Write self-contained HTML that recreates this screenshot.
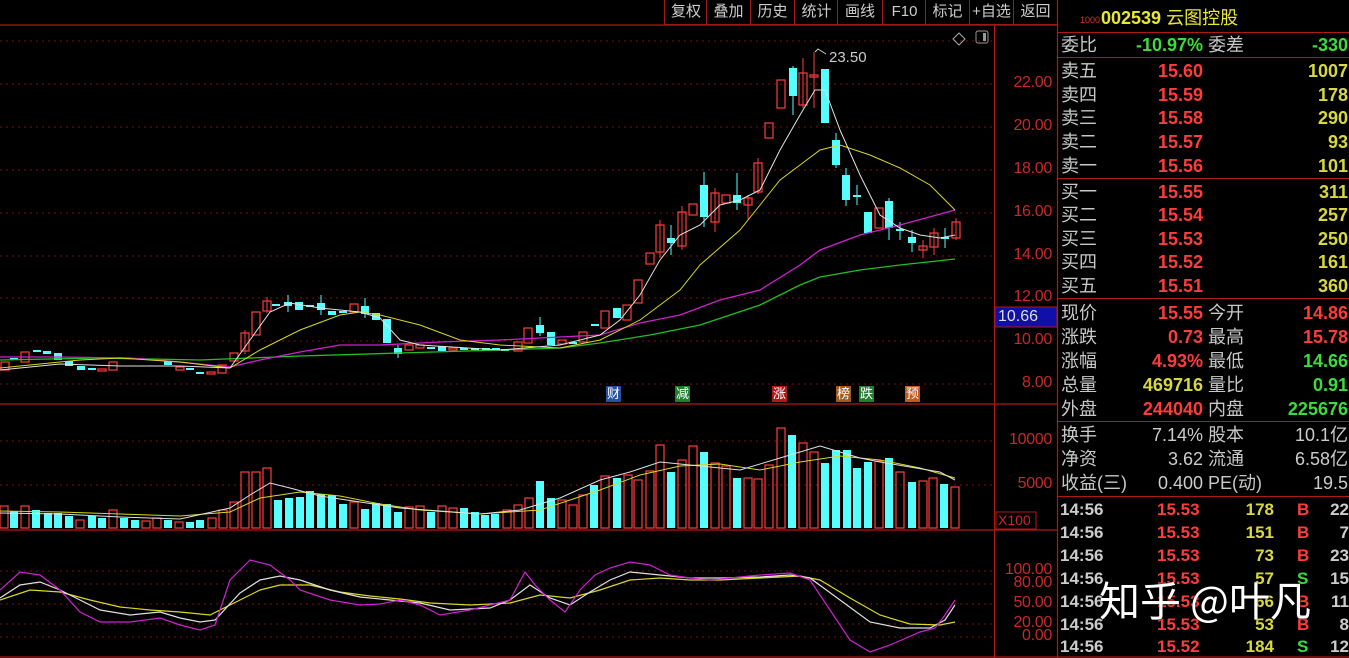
<!DOCTYPE html>
<html><head><meta charset="utf-8"><style>
html,body{margin:0;padding:0;background:#000;width:1349px;height:658px;overflow:hidden}
body{position:relative;font-family:"Liberation Sans","Noto Sans CJK SC",sans-serif}
.t{position:absolute;white-space:nowrap}
.btn{position:absolute;top:0;height:24px;line-height:24px;color:#ccc;font-size:15px;text-align:center;border-left:1px solid #a01818;border-bottom:1px solid #a01818}
.ax{position:absolute;right:297px;color:#c82828;font-size:16px;font-family:"Liberation Sans",sans-serif;letter-spacing:-0.3px}
.r{position:absolute;left:1057px;width:292px;height:24px;font-size:18px;line-height:24px}
.r .l{position:absolute;left:4px;color:#c8c8c8}
.r .v{position:absolute;right:146px;font-weight:bold}
.r .l2{position:absolute;left:151px;color:#c8c8c8}
.r .v2{position:absolute;right:1px;font-weight:bold}
.k{position:absolute;left:1057px;width:292px;height:23px;font-size:17px;line-height:23px;font-weight:bold}
.k span{position:absolute}
.red{color:#ff3c3c}.yel{color:#d8d840}.grn{color:#3cdc3c}.wht{color:#ccc}
.hl{position:absolute;left:1057px;width:292px;height:1px;background:#b01818}
.mk{position:absolute;top:386px;width:15px;height:16px;font-size:13px;line-height:16px;text-align:center;color:#fff}
</style></head><body>
<svg width="1349" height="658" style="position:absolute;left:0;top:0">
<g stroke="#7a1010" stroke-dasharray="2,4" stroke-width="1">
<line x1="0" y1="41" x2="994" y2="41"/><line x1="0" y1="84" x2="994" y2="84"/><line x1="0" y1="127" x2="994" y2="127"/><line x1="0" y1="170" x2="994" y2="170"/><line x1="0" y1="213" x2="994" y2="213"/><line x1="0" y1="256" x2="994" y2="256"/><line x1="0" y1="298" x2="994" y2="298"/><line x1="0" y1="341" x2="994" y2="341"/><line x1="0" y1="384" x2="994" y2="384"/>
<line x1="0" y1="441" x2="994" y2="441"/><line x1="0" y1="485" x2="994" y2="485"/>
<line x1="0" y1="571" x2="994" y2="571"/><line x1="0" y1="584" x2="994" y2="584"/><line x1="0" y1="604" x2="994" y2="604"/><line x1="0" y1="624" x2="994" y2="624"/><line x1="0" y1="637" x2="994" y2="637"/>
</g>
<g stroke="#b01818" stroke-width="1.2">
<line x1="0" y1="25" x2="1057" y2="25"/>
<line x1="0" y1="404" x2="1057" y2="404"/><line x1="0" y1="530" x2="1057" y2="530"/>
<line x1="994.5" y1="25" x2="994.5" y2="658"/><line x1="1057.5" y1="0" x2="1057.5" y2="658"/>
<line x1="0" y1="657" x2="1349" y2="657"/>
</g>
<rect x="996" y="512" width="40" height="17" fill="none" stroke="#b01818"/>
<rect x="995" y="307" width="62" height="20" fill="#1010a8" stroke="#b01818"/>
<path d="M959 33l6 6-6 6-6-6z" fill="none" stroke="#aaa"/><rect x="976" y="31" width="12" height="12" rx="2" fill="none" stroke="#999"/><rect x="983" y="33" width="3" height="8" fill="#999"/>
<g stroke-width="1">
<g stroke="#ff3c3c"><line x1="660" y1="220" x2="660" y2="258"/><line x1="682" y1="206" x2="682" y2="250"/><line x1="715" y1="188" x2="715" y2="232"/><line x1="748" y1="195" x2="748" y2="219"/><line x1="758" y1="158" x2="758" y2="194"/><line x1="803" y1="58" x2="803" y2="108"/><line x1="814" y1="52" x2="814" y2="108"/><line x1="245" y1="330" x2="245" y2="354"/><line x1="267" y1="297" x2="267" y2="313"/><line x1="934" y1="228" x2="934" y2="255"/><line x1="923" y1="240" x2="923" y2="258"/><line x1="956" y1="218" x2="956" y2="240"/></g>
<g stroke="#5ff"><line x1="704" y1="172" x2="704" y2="227"/><line x1="737" y1="173" x2="737" y2="210"/><line x1="671" y1="225" x2="671" y2="255"/><line x1="793" y1="66" x2="793" y2="115"/><line x1="846" y1="168" x2="846" y2="206"/><line x1="857" y1="185" x2="857" y2="205"/><line x1="889" y1="198" x2="889" y2="240"/><line x1="900" y1="222" x2="900" y2="240"/><line x1="912" y1="230" x2="912" y2="252"/><line x1="945" y1="228" x2="945" y2="248"/><line x1="540" y1="317" x2="540" y2="336"/><line x1="288" y1="295" x2="288" y2="312"/><line x1="321" y1="295" x2="321" y2="315"/><line x1="365" y1="298" x2="365" y2="318"/><line x1="398" y1="345" x2="398" y2="358"/><line x1="836" y1="133" x2="836" y2="168"/></g>
</g>
<g fill="none" stroke="#ff3c3c" stroke-width="1.2">
<rect x="1" y="362" width="8" height="8"/><rect x="21" y="352" width="8" height="10"/><rect x="98" y="369" width="8" height="2"/><rect x="109" y="362" width="8" height="8"/><rect x="176" y="367" width="8" height="3"/><rect x="207" y="372" width="8" height="2"/><rect x="218" y="365" width="8" height="8"/><rect x="230" y="353" width="8" height="8"/><rect x="241" y="333" width="8" height="18"/><rect x="252" y="312" width="8" height="23"/><rect x="263" y="301" width="8" height="10"/><rect x="350" y="304" width="8" height="8"/><rect x="405" y="345" width="8" height="5"/><rect x="416" y="345" width="8" height="3"/><rect x="449" y="348" width="8" height="2"/>
<rect x="514" y="342" width="8" height="9"/><rect x="524" y="328" width="8" height="15"/><rect x="558" y="340" width="8" height="4"/><rect x="579" y="332" width="8" height="10"/><rect x="601" y="311" width="8" height="17"/><rect x="623" y="305" width="8" height="15"/><rect x="634" y="280" width="8" height="23"/><rect x="646" y="253" width="8" height="11"/><rect x="656" y="225" width="8" height="27"/><rect x="678" y="212" width="8" height="34"/><rect x="689" y="204" width="8" height="11"/><rect x="711" y="193" width="8" height="29"/><rect x="722" y="195" width="8" height="8"/><rect x="744" y="198" width="8" height="7"/><rect x="754" y="163" width="8" height="29"/><rect x="765" y="123" width="8" height="15"/><rect x="777" y="80" width="8" height="28"/><rect x="799" y="73" width="8" height="32"/><rect x="810" y="75" width="8" height="2"/><rect x="875" y="208" width="8" height="20"/><rect x="919" y="246" width="8" height="4"/><rect x="930" y="233" width="8" height="14"/><rect x="952" y="222" width="8" height="16"/>
</g>
<g fill="#5ff">
<rect x="10" y="358" width="8" height="2"/><rect x="33" y="350" width="8" height="2"/><rect x="43" y="351" width="8" height="3"/><rect x="54" y="353" width="8" height="7"/><rect x="65" y="361" width="8" height="5"/><rect x="77" y="366" width="8" height="4"/><rect x="88" y="368" width="8" height="2"/><rect x="164" y="361" width="8" height="4"/><rect x="186" y="368" width="8" height="2"/><rect x="196" y="372" width="8" height="2"/>
<rect x="272" y="304" width="8" height="2"/><rect x="284" y="302" width="8" height="4"/><rect x="295" y="302" width="8" height="8"/><rect x="306" y="305" width="8" height="2"/><rect x="317" y="303" width="8" height="7"/><rect x="328" y="311" width="8" height="4"/><rect x="339" y="311" width="8" height="2"/><rect x="361" y="306" width="8" height="8"/><rect x="372" y="313" width="8" height="7"/><rect x="383" y="319" width="8" height="24"/><rect x="394" y="348" width="8" height="6"/><rect x="427" y="347" width="8" height="2"/><rect x="438" y="346" width="8" height="5"/><rect x="460" y="348" width="8" height="2"/><rect x="471" y="348" width="8" height="2"/><rect x="482" y="348" width="8" height="2"/><rect x="492" y="348" width="8" height="2"/><rect x="501" y="349" width="8" height="2"/>
<rect x="536" y="325" width="8" height="8"/><rect x="547" y="332" width="8" height="13"/><rect x="569" y="342" width="8" height="2"/><rect x="591" y="324" width="8" height="2"/><rect x="613" y="308" width="8" height="10"/><rect x="667" y="238" width="8" height="5"/><rect x="700" y="185" width="8" height="32"/><rect x="733" y="195" width="8" height="8"/><rect x="789" y="68" width="8" height="28"/><rect x="821" y="69" width="8" height="54"/><rect x="832" y="140" width="8" height="25"/><rect x="842" y="175" width="8" height="25"/><rect x="853" y="195" width="8" height="2"/><rect x="864" y="212" width="8" height="21"/><rect x="885" y="201" width="8" height="27"/><rect x="896" y="229" width="8" height="2"/><rect x="908" y="237" width="8" height="6"/><rect x="941" y="237" width="8" height="2"/>
</g>
<g fill="none" stroke-width="1.3">
<polyline stroke="#20c020" points="0,360 100,358 200,360 300,356 400,353 500,350 560,348 600,343 650,335 700,325 760,305 800,285 820,277 860,270 900,265 955,259"/>
<polyline stroke="#d020d0" points="0,357 60,357 130,358 180,362 230,367 260,360 300,352 340,345 380,345 440,342 500,340 560,337 600,335 640,323 680,315 720,300 760,290 800,265 820,250 860,235 900,225 955,210"/>
<polyline stroke="#d8d820" stroke-width="1" points="0,368 40,364 80,360 120,358 180,362 230,368 260,350 300,330 340,315 360,312 380,315 420,325 460,340 500,345 560,348 600,340 640,320 680,290 700,265 740,230 760,205 780,180 800,165 820,150 840,145 870,155 900,168 930,185 955,210"/>
<polyline stroke="#e0e0e0" stroke-width="1" points="0,370 60,364 120,366 180,366 230,368 250,340 270,312 290,303 320,308 360,312 380,318 400,340 420,345 500,350 560,345 600,335 620,320 640,295 660,260 680,235 700,225 720,205 740,200 760,190 780,150 800,115 815,90 825,90 840,130 860,175 880,215 900,228 920,235 940,238 955,235"/>
</g>
<path d="M815 52l3-3 8 5" fill="none" stroke="#ccc"/>
<g fill="none" stroke="#ff3c3c" stroke-width="1.2">
<rect x="0" y="506" width="8" height="22"/><rect x="21" y="506" width="8" height="22"/><rect x="76" y="520" width="8" height="8"/><rect x="109" y="510" width="8" height="18"/><rect x="142" y="521" width="8" height="7"/><rect x="153" y="518" width="8" height="10"/><rect x="175" y="522" width="8" height="6"/><rect x="208" y="518" width="8" height="10"/><rect x="219" y="510" width="8" height="18"/><rect x="230" y="502" width="8" height="26"/><rect x="241" y="472" width="8" height="56"/><rect x="252" y="472" width="8" height="56"/><rect x="263" y="468" width="8" height="60"/><rect x="350" y="502" width="8" height="26"/><rect x="405" y="507" width="8" height="21"/><rect x="416" y="506" width="8" height="22"/><rect x="438" y="506" width="8" height="22"/><rect x="449" y="508" width="8" height="20"/>
<rect x="503" y="510" width="8" height="18"/><rect x="514" y="505" width="8" height="23"/><rect x="525" y="498" width="8" height="30"/><rect x="558" y="500" width="8" height="28"/><rect x="569" y="505" width="8" height="23"/><rect x="579" y="495" width="8" height="33"/><rect x="601" y="476" width="8" height="52"/><rect x="624" y="475" width="8" height="53"/><rect x="634" y="480" width="8" height="48"/><rect x="646" y="471" width="8" height="57"/><rect x="656" y="445" width="8" height="83"/><rect x="678" y="460" width="8" height="68"/><rect x="689" y="446" width="8" height="82"/><rect x="711" y="463" width="8" height="65"/><rect x="722" y="466" width="8" height="62"/><rect x="744" y="478" width="8" height="50"/><rect x="754" y="479" width="8" height="49"/><rect x="765" y="465" width="8" height="63"/><rect x="777" y="428" width="8" height="100"/><rect x="799" y="443" width="8" height="85"/><rect x="810" y="452" width="8" height="76"/><rect x="875" y="461" width="8" height="67"/><rect x="896" y="472" width="8" height="56"/><rect x="919" y="481" width="8" height="47"/><rect x="929" y="478" width="8" height="50"/><rect x="951" y="487" width="8" height="41"/>
</g>
<g fill="#5ff">
<rect x="10" y="511" width="8" height="17"/><rect x="32" y="510" width="8" height="18"/><rect x="44" y="513" width="8" height="15"/><rect x="54" y="513" width="8" height="15"/><rect x="65" y="516" width="8" height="12"/><rect x="88" y="516" width="8" height="12"/><rect x="98" y="518" width="8" height="10"/><rect x="120" y="518" width="8" height="10"/><rect x="131" y="520" width="8" height="8"/><rect x="164" y="520" width="8" height="8"/><rect x="186" y="522" width="8" height="6"/><rect x="196" y="520" width="8" height="8"/>
<rect x="274" y="500" width="8" height="28"/><rect x="285" y="498" width="8" height="30"/><rect x="296" y="497" width="8" height="31"/><rect x="306" y="491" width="8" height="37"/><rect x="317" y="494" width="8" height="34"/><rect x="328" y="495" width="8" height="33"/><rect x="339" y="504" width="8" height="24"/><rect x="361" y="509" width="8" height="19"/><rect x="372" y="503" width="8" height="25"/><rect x="383" y="504" width="8" height="24"/><rect x="394" y="512" width="8" height="16"/><rect x="427" y="512" width="8" height="16"/><rect x="460" y="508" width="8" height="20"/><rect x="471" y="512" width="8" height="16"/><rect x="481" y="515" width="8" height="13"/><rect x="491" y="514" width="8" height="14"/>
<rect x="536" y="481" width="8" height="47"/><rect x="547" y="498" width="8" height="30"/><rect x="590" y="485" width="8" height="43"/><rect x="613" y="478" width="8" height="50"/><rect x="667" y="472" width="8" height="56"/><rect x="700" y="452" width="8" height="76"/><rect x="733" y="478" width="8" height="50"/><rect x="788" y="435" width="8" height="93"/><rect x="821" y="463" width="8" height="65"/><rect x="832" y="450" width="8" height="78"/><rect x="843" y="450" width="8" height="78"/><rect x="853" y="468" width="8" height="60"/><rect x="864" y="462" width="8" height="66"/><rect x="885" y="458" width="8" height="70"/><rect x="908" y="482" width="8" height="46"/><rect x="940" y="484" width="8" height="44"/>
</g>
<g fill="none" stroke-width="1">
<polyline stroke="#d8d820" points="0,511 60,512 120,514 180,516 230,512 260,498 300,492 340,496 380,504 420,510 480,514 540,510 600,490 640,475 680,466 720,464 760,470 800,462 840,456 880,460 920,468 955,478"/>
<polyline stroke="#e0e0e0" points="0,513 60,514 120,517 180,519 230,508 250,495 270,483 290,488 320,496 360,502 400,508 440,511 480,514 520,510 560,498 600,480 630,472 660,462 700,466 740,470 780,458 800,452 820,446 840,452 860,458 880,462 910,467 940,472 955,480"/>
</g>
<g fill="none" stroke-width="1.2">
<polyline stroke="#d8d820" points="0,600 30,590 60,592 90,600 120,607 150,610 180,612 210,615 240,600 260,590 280,585 310,585 340,592 370,596 400,599 430,603 470,605 510,603 540,595 570,598 600,590 630,580 660,578 690,580 720,580 760,578 800,576 820,580 850,598 880,615 910,624 940,625 955,622"/>
<polyline stroke="#e0e0e0" points="0,598 20,585 40,582 60,590 80,600 100,610 130,615 160,612 180,618 200,622 215,620 240,593 260,580 280,576 300,580 330,590 360,597 390,600 420,603 450,610 490,608 510,600 530,585 550,598 570,605 590,592 610,580 630,572 660,575 690,578 720,578 760,577 790,575 810,578 840,600 870,622 900,628 930,628 945,620 955,605"/>
<polyline stroke="#d020d0" points="0,590 20,572 40,575 60,590 80,612 100,622 130,622 160,618 180,625 200,630 215,625 230,580 250,560 270,565 290,580 300,590 330,600 360,605 380,604 400,600 420,605 440,615 470,610 490,605 510,600 525,572 535,585 550,600 565,612 580,590 595,575 610,568 630,562 650,565 670,575 690,578 710,580 730,578 760,575 790,573 810,580 830,610 850,640 870,652 890,645 920,632 935,628 945,615 955,600"/>
</g>
</svg>

<div class="t" style="left:829px;top:49px;color:#ccc;font-size:15px">23.50</div>

<div class="btn" style="left:664px;width:42px">复权</div><div class="btn" style="left:706px;width:43px">叠加</div><div class="btn" style="left:750px;width:43px">历史</div><div class="btn" style="left:794px;width:43px">统计</div><div class="btn" style="left:837px;width:44px">画线</div><div class="btn" style="left:882px;width:43px">F10</div><div class="btn" style="left:925px;width:43px">标记</div><div class="btn" style="left:969px;width:43px">+自选</div><div class="btn" style="left:1013px;width:43px">返回</div>

<div class="ax" style="top:74px">22.00</div><div class="ax" style="top:117px">20.00</div><div class="ax" style="top:160px">18.00</div><div class="ax" style="top:203px">16.00</div><div class="ax" style="top:246px">14.00</div><div class="ax" style="top:288px">12.00</div>
<div class="t" style="left:998px;top:308px;color:#ddd;font-size:16px">10.66</div>
<div class="ax" style="top:331px">10.00</div><div class="ax" style="top:374px">8.00</div>
<div class="ax" style="top:431px">10000</div><div class="ax" style="top:475px">5000</div>
<div class="t" style="left:998px;top:512px;color:#c82828;font-size:14px">X100</div>
<div class="ax" style="top:561px">100.00</div><div class="ax" style="top:574px">80.00</div><div class="ax" style="top:594px">50.00</div><div class="ax" style="top:614px">20.00</div><div class="ax" style="top:627px">0.00</div>

<div class="mk" style="left:606px;background:#2850a0">财</div><div class="mk" style="left:675px;background:#208030">减</div><div class="mk" style="left:772px;background:#b01818">涨</div><div class="mk" style="left:836px;background:#a05a20">榜</div><div class="mk" style="left:859px;background:#208030">跌</div><div class="mk" style="left:905px;background:#c05a20">预</div>

<div class="t" style="left:1080px;top:15px;color:#d83030;font-size:9px">1000</div>
<div class="t" style="left:1101px;top:4px;color:#e8e830;font-size:18px;font-weight:bold">002539 <span style="font-weight:normal">云图控股</span></div>
<div class="hl" style="top:32px"></div>
<div class="r" style="top:33px"><span class="l">委比</span><span class="v grn">-10.97%</span><span class="l2">委差</span><span class="v2 grn">-330</span></div>
<div class="hl" style="top:57px"></div>
<div class="r" style="top:59px"><span class="l">卖五</span><span class="v red">15.60</span><span class="v2 yel">1007</span></div>
<div class="r" style="top:83px"><span class="l">卖四</span><span class="v red">15.59</span><span class="v2 yel">178</span></div>
<div class="r" style="top:106px"><span class="l">卖三</span><span class="v red">15.58</span><span class="v2 yel">290</span></div>
<div class="r" style="top:130px"><span class="l">卖二</span><span class="v red">15.57</span><span class="v2 yel">93</span></div>
<div class="r" style="top:154px"><span class="l">卖一</span><span class="v red">15.56</span><span class="v2 yel">101</span></div>
<div class="hl" style="top:178px"></div>
<div class="r" style="top:180px"><span class="l">买一</span><span class="v red">15.55</span><span class="v2 yel">311</span></div>
<div class="r" style="top:203px"><span class="l">买二</span><span class="v red">15.54</span><span class="v2 yel">257</span></div>
<div class="r" style="top:227px"><span class="l">买三</span><span class="v red">15.53</span><span class="v2 yel">250</span></div>
<div class="r" style="top:250px"><span class="l">买四</span><span class="v red">15.52</span><span class="v2 yel">161</span></div>
<div class="r" style="top:274px"><span class="l">买五</span><span class="v red">15.51</span><span class="v2 yel">360</span></div>
<div class="hl" style="top:298px"></div>
<div class="r" style="top:301px"><span class="l">现价</span><span class="v red">15.55</span><span class="l2">今开</span><span class="v2 red">14.86</span></div>
<div class="r" style="top:325px"><span class="l">涨跌</span><span class="v red">0.73</span><span class="l2">最高</span><span class="v2 red">15.78</span></div>
<div class="r" style="top:349px"><span class="l">涨幅</span><span class="v red">4.93%</span><span class="l2">最低</span><span class="v2 grn">14.66</span></div>
<div class="r" style="top:373px"><span class="l">总量</span><span class="v yel">469716</span><span class="l2">量比</span><span class="v2 grn">0.91</span></div>
<div class="r" style="top:397px"><span class="l">外盘</span><span class="v red">244040</span><span class="l2">内盘</span><span class="v2 grn">225676</span></div>
<div class="hl" style="top:421px"></div>
<div class="r" style="top:423px"><span class="l">换手</span><span class="v wht" style="font-weight:normal">7.14%</span><span class="l2">股本</span><span class="v2 wht" style="font-weight:normal">10.1亿</span></div>
<div class="r" style="top:447px"><span class="l">净资</span><span class="v wht" style="font-weight:normal">3.62</span><span class="l2">流通</span><span class="v2 wht" style="font-weight:normal">6.58亿</span></div>
<div class="r" style="top:471px"><span class="l">收益(三)</span><span class="v wht" style="font-weight:normal">0.400</span><span class="l2">PE(动)</span><span class="v2 wht" style="font-weight:normal">19.5</span></div>
<div class="hl" style="top:496px"></div>

<div class="k" style="top:498px"><span class="wht" style="left:3px">14:56</span><span class="red" style="left:100px">15.53</span><span class="yel" style="right:75px">178</span><span class="red" style="left:240px">B</span><span class="wht" style="right:0">22</span></div>
<div class="k" style="top:521px"><span class="wht" style="left:3px">14:56</span><span class="red" style="left:100px">15.53</span><span class="yel" style="right:75px">151</span><span class="red" style="left:240px">B</span><span class="wht" style="right:0">7</span></div>
<div class="k" style="top:544px"><span class="wht" style="left:3px">14:56</span><span class="red" style="left:100px">15.53</span><span class="yel" style="right:75px">73</span><span class="red" style="left:240px">B</span><span class="wht" style="right:0">23</span></div>
<div class="k" style="top:567px"><span class="wht" style="left:3px">14:56</span><span class="red" style="left:100px">15.53</span><span class="yel" style="right:75px">57</span><span class="grn" style="left:240px">S</span><span class="wht" style="right:0">15</span></div>
<div class="k" style="top:590px"><span class="wht" style="left:3px">14:56</span><span class="red" style="left:100px">15.53</span><span class="yel" style="right:75px">66</span><span class="red" style="left:240px">B</span><span class="wht" style="right:0">11</span></div>
<div class="k" style="top:613px"><span class="wht" style="left:3px">14:56</span><span class="red" style="left:100px">15.53</span><span class="yel" style="right:75px">53</span><span class="red" style="left:240px">B</span><span class="wht" style="right:0">8</span></div>
<div class="k" style="top:635px"><span class="wht" style="left:3px">14:56</span><span class="red" style="left:100px">15.52</span><span class="yel" style="right:75px">184</span><span class="grn" style="left:240px">S</span><span class="wht" style="right:0">12</span></div>

<div class="t" style="left:1099px;top:573px;color:#fff;font-size:41px;line-height:50px;font-family:'Noto Sans CJK SC',sans-serif;text-shadow:0 0 2px #000">知乎 @叶凡</div>
</body></html>
